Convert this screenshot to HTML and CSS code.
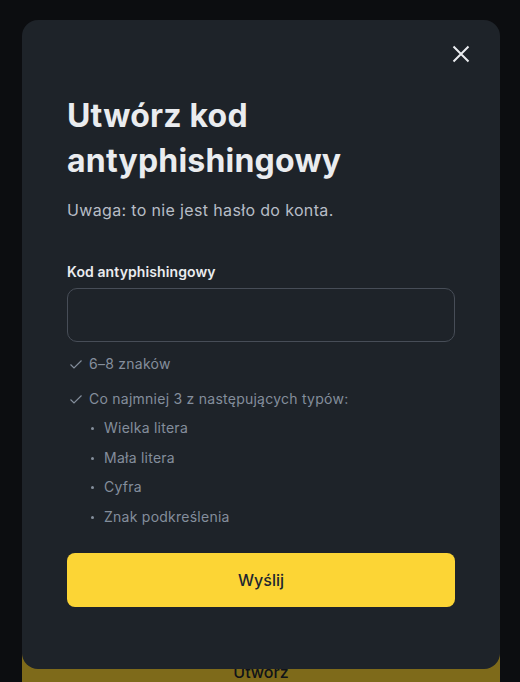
FILE: index.html
```html
<!DOCTYPE html>
<html lang="pl">
<head>
  <meta charset="UTF-8">
  <meta name="viewport" content="width=device-width, initial-scale=1.0">
  <title>Kod antyphishingowy</title>
  <link rel="stylesheet" href="styles.css">
</head>

<body>

  <!-- Page behind the modal -->
  <div class="page">
    <button class="create-btn">Utwórz</button>
  </div>

  <!-- Modal -->
  <div class="overlay">
    <div class="modal">
      <div class="modal-top">
        <button class="close-btn" aria-label="Zamknij">
          <svg width="20" height="20" viewBox="0 0 20 20">
            <path d="M2.5 2.5 L17.5 17.5 M17.5 2.5 L2.5 17.5" stroke="#eaecef" stroke-width="2" fill="none"/>
          </svg>
        </button>
      </div>

      <h1 class="modal-title">Utwórz kod antyphishingowy</h1>
      <p class="modal-note">Uwaga: to nie jest hasło do konta.</p>

      <form class="code-form">
        <label for="antiCode">Kod antyphishingowy</label>
        <input type="text" id="antiCode">

        <ul class="rules">
          <li class="rule">
            <svg class="check" width="14" height="14" viewBox="0 0 14 14">
              <path d="M1.5 7.5 L5 11 L12.5 3.5" stroke="#848e9c" stroke-width="1.2" fill="none"/>
            </svg>
            <span>6–8 znaków</span>
          </li>
          <li class="rule">
            <svg class="check" width="14" height="14" viewBox="0 0 14 14">
              <path d="M1.5 7.5 L5 11 L12.5 3.5" stroke="#848e9c" stroke-width="1.2" fill="none"/>
            </svg>
            <span>Co najmniej 3 z następujących typów:</span>
          </li>
        </ul>
        <ul class="types">
          <li>Wielka litera</li>
          <li>Mała litera</li>
          <li>Cyfra</li>
          <li>Znak podkreślenia</li>
        </ul>

        <button type="button" class="submit-btn">Wyślij</button>
      </form>
    </div>
  </div>

</body>

</html>
```

FILE: styles.css
```css
/* General Styles */
body {
  font-family: Inter, "Open Sans", sans-serif;
  background-color: #181a20;
  margin: 0;
  padding: 0;
  height: 682px;
  overflow: hidden;
}

/* Page behind */
.page {
  height: 682px;
  display: flex;
  flex-direction: column;
  justify-content: flex-end;
  padding: 0 20px 0 22px;
}

.create-btn {
  width: 478px;
  height: 48px;
  margin-bottom: -14px;
  background-color: #fcd535;
  color: #202630;
  border: none;
  border-radius: 8px;
  font-family: inherit;
  font-size: 16px;
  font-weight: 500;
}

/* Overlay */
.overlay {
  position: fixed;
  top: 0;
  left: 0;
  width: 100%;
  height: 100%;
  background-color: rgba(0, 0, 0, 0.5);
}

.modal {
  margin: 20px 0 0 22px;
  width: 478px;
  height: 649px;
  box-sizing: border-box;
  padding: 24px 45px 0;
  background-color: #1e2329;
  border-radius: 16px;
  color: #eaecef;
}

.modal-top {
  display: flex;
  justify-content: flex-end;
  margin-right: -16px;
}

.close-btn {
  background: none;
  border: none;
  padding: 0;
  width: 20px;
  height: 20px;
  cursor: pointer;
}

.modal-title {
  margin: 29px 0 0;
  font-size: 32px;
  line-height: 45px;
  font-weight: 700;
  letter-spacing: 0.2px;
  color: #eaecef;
}

.modal-note {
  margin: 15px 0 0;
  font-size: 16px;
  line-height: 24px;
  letter-spacing: 0.35px;
  color: #b7bdc6;
}

/* Form */
.code-form {
  margin-top: 40px;
}

.code-form label {
  display: block;
  font-size: 14px;
  line-height: 20px;
  font-weight: 600;
  letter-spacing: 0.1px;
  color: #eaecef;
  margin-bottom: 6px;
}

.code-form input {
  display: block;
  width: 100%;
  height: 54px;
  box-sizing: border-box;
  background: transparent;
  border: 1px solid #474d57;
  border-radius: 10px;
  color: #eaecef;
  font-size: 16px;
  padding: 0 16px;
}

.rules {
  list-style: none;
  margin: 12px 0 0;
  padding: 0;
}

.rule {
  display: flex;
  align-items: center;
  gap: 6px;
  font-size: 14px;
  line-height: 20px;
  letter-spacing: 0.25px;
  color: #848e9c;
  margin-bottom: 15px;
}

.rule:last-child {
  margin-bottom: 0;
}

.check {
  margin-left: 2px;
  flex-shrink: 0;
}

.types {
  list-style: none;
  margin: 9px 0 0;
  padding: 0 0 0 24px;
}

.types li {
  position: relative;
  padding-left: 13px;
  font-size: 14px;
  line-height: 20px;
  letter-spacing: 0.25px;
  color: #848e9c;
  margin-bottom: 9.5px;
}

.types li::before {
  content: "";
  position: absolute;
  left: 0;
  top: 9px;
  width: 3px;
  height: 3px;
  border-radius: 50%;
  background-color: #848e9c;
}

.submit-btn {
  width: 100%;
  height: 54px;
  margin-top: 17px;
  background-color: #fcd535;
  color: #202630;
  border: none;
  border-radius: 8px;
  font-family: inherit;
  font-size: 16px;
  font-weight: 500;
  cursor: pointer;
}
```
